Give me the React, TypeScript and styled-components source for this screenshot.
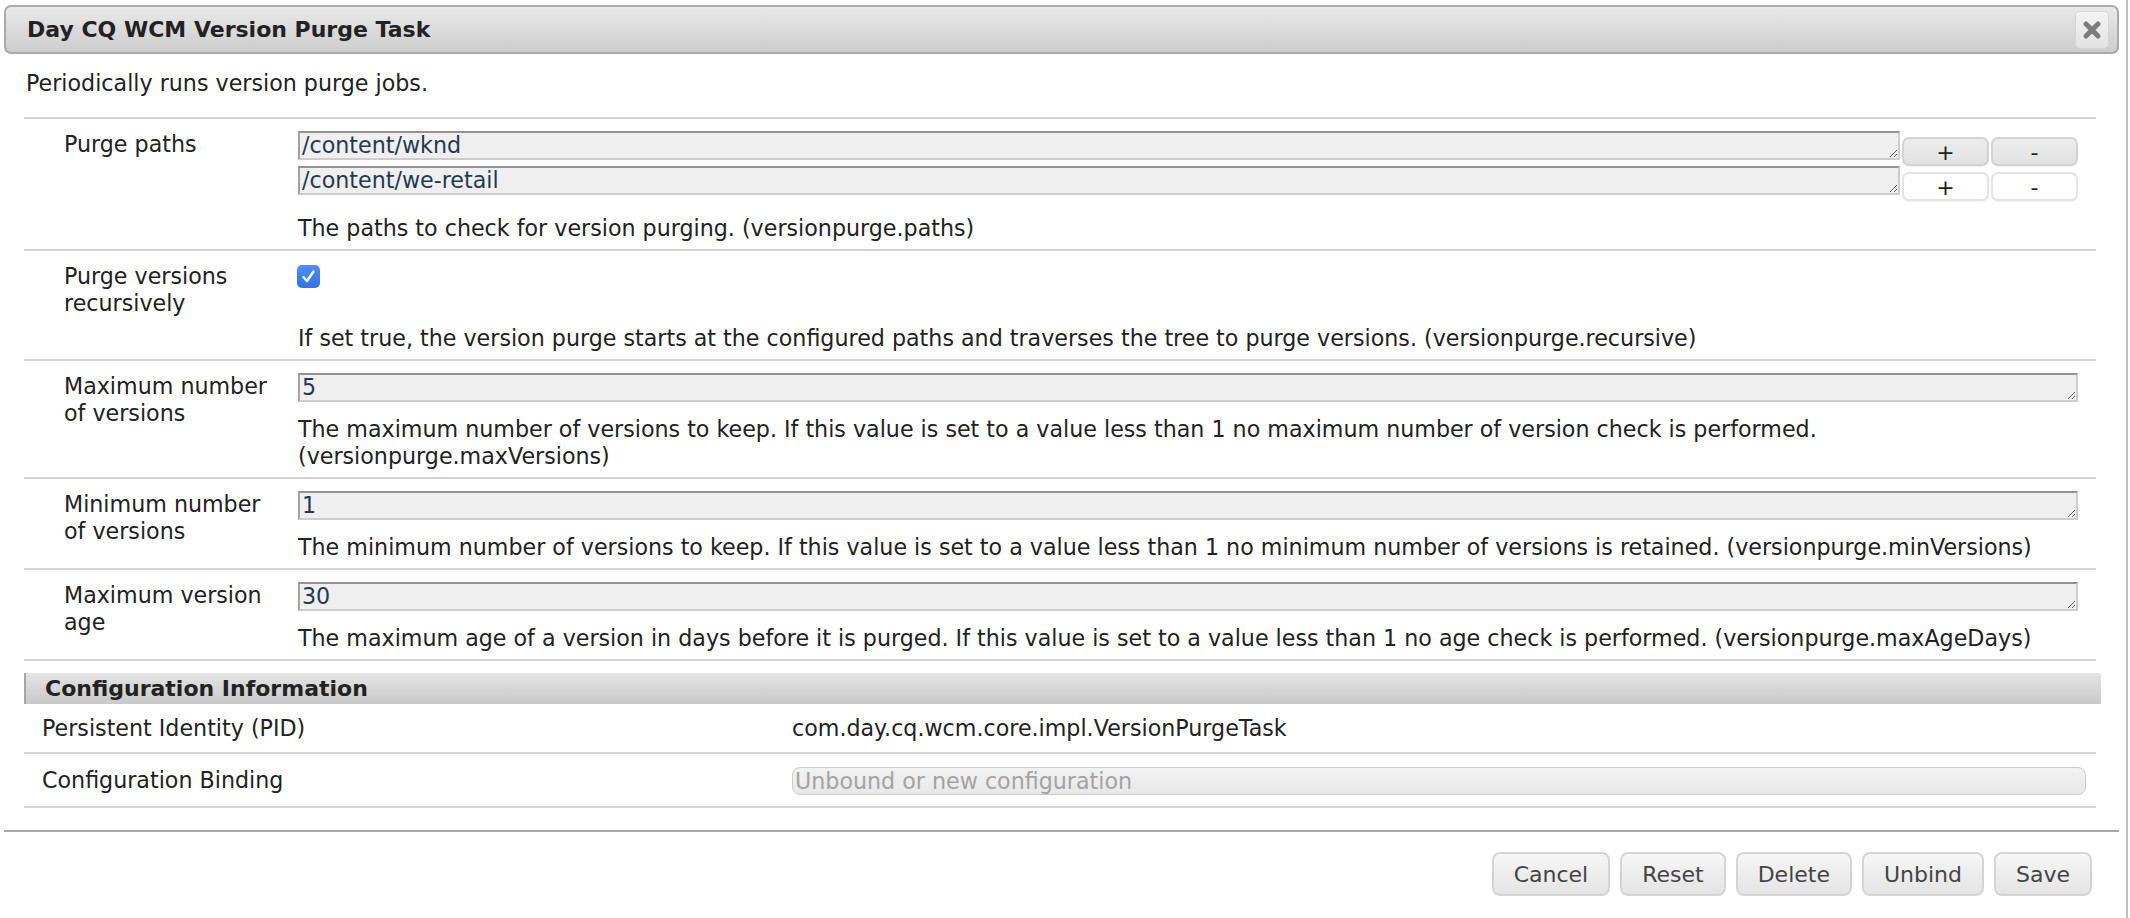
import React from "react";
import styled, { createGlobalStyle } from "styled-components";

const GlobalStyle = createGlobalStyle`
  html, body {
    margin: 0;
    padding: 0;
    background: #ffffff;
  }
  body {
    font-family: "DejaVu Sans", Verdana, sans-serif;
    font-size: 22.2px;
    color: #222222;
  }
  * {
    box-sizing: border-box;
  }
`;

const Dialog = styled.div`
  width: 2128px;
  height: 918px;
  border-right: 2px solid #c2c2c2;
  padding: 5px 7px 0 4px;
  display: flex;
  flex-direction: column;
`;

const TitleBar = styled.div`
  height: 49px;
  border: 2px solid #aaaaaa;
  border-radius: 7px;
  background: linear-gradient(#e9e9e9, #cdcdcd);
  display: flex;
  align-items: center;
  justify-content: space-between;
  padding: 0 8px 0 21px;
`;

const Title = styled.span`
  font-weight: bold;
  font-size: 22px;
  color: #222222;
`;

const CloseButton = styled.button`
  width: 34px;
  height: 38px;
  border: 1px solid #d6d6d6;
  border-radius: 5px;
  background: linear-gradient(#f4f4f4, #e2e2e2);
  display: flex;
  align-items: center;
  justify-content: center;
  padding: 0;
`;

const Body = styled.div`
  padding: 0 23px 0 20px;
`;

const Intro = styled.p`
  margin: 16px 0 20px 2px;
  line-height: 27px;
`;

const Form = styled.div`
  border-top: 2px solid #d3d3d3;
`;

const Row = styled.div`
  display: grid;
  grid-template-columns: 234px 1fr;
  padding: 12px 18px 7px 40px;
  border-bottom: 2px solid #d3d3d3;
`;

const Label = styled.div`
  line-height: 27px;
  padding-right: 20px;
`;

const Field = styled.div`
  display: flex;
  flex-direction: column;
`;

const PathLine = styled.div`
  display: flex;
  align-items: flex-start;
  gap: 2px;
`;

const TextInput = styled.textarea<{ $tall?: boolean }>`
  flex: 1;
  width: 100%;
  height: ${(p) => (p.$tall ? "29px" : "28px")};
  margin: 0;
  padding: 0 2px;
  font-family: "DejaVu Sans", Verdana, sans-serif;
  font-size: 22.2px;
  line-height: 25px;
  color: #1f3a52;
  background: #efefef;
  border: 2px solid;
  border-color: #929292 #cdcdcd #cdcdcd #a4a4a4;
  overflow: hidden;
  white-space: nowrap;
  display: block;
`;

const SmallButton = styled.button<{ $pressed?: boolean }>`
  width: 87px;
  height: 29px;
  margin-top: 6px;
  border: 2px solid ${(p) => (p.$pressed ? "#d2d2d2" : "#e4e4e4")};
  border-radius: 7px;
  background: ${(p) => (p.$pressed ? "linear-gradient(#ececec, #e2e2e2)" : "#ffffff")};
  font-family: "DejaVu Sans", Verdana, sans-serif;
  font-size: 22px;
  line-height: 22px;
  color: #222222;
  padding: 2px 0 0;
  box-shadow: 0 1px 1px rgba(0, 0, 0, 0.06);
`;

const Help = styled.div<{ $gap?: number }>`
  margin-top: ${(p) => p.$gap ?? 14}px;
  line-height: 27px;
`;

const CheckLine = styled.div`
  height: 27px;
  display: flex;
  align-items: center;
`;

const CheckBox = styled.span`
  width: 23px;
  height: 23px;
  border-radius: 5px;
  background: linear-gradient(#4d8ff8, #2f72ec);
  display: inline-flex;
  align-items: center;
  justify-content: center;
  margin-left: -1px;
`;

const InfoHeader = styled.div`
  margin-top: 12px;
  height: 31px;
  line-height: 31px;
  padding-left: 19px;
  font-weight: bold;
  font-size: 22px;
  color: #222222;
  border-left: 2px solid #a6a6a6;
  background: linear-gradient(#e4e4e4, #c9c9c9);
  margin-right: -5px;
`;

const InfoRow = styled.div<{ $height: number }>`
  display: grid;
  grid-template-columns: 750px 1fr;
  align-items: center;
  min-height: ${(p) => p.$height}px;
  padding: 0 10px 0 18px;
  border-bottom: 2px solid #d3d3d3;
`;

const DisabledInput = styled.div`
  height: 28px;
  line-height: 26px;
  padding: 0 2px;
  border: 1px solid #cccccc;
  border-radius: 8px;
  background: linear-gradient(#f2f2f2, #e8e8e8);
  color: #a3a3a3;
  margin-top: 1px;
`;

const Footer = styled.div`
  margin-top: 22px;
  border-top: 2px solid #a9a9a9;
  display: flex;
  justify-content: flex-end;
  gap: 10px;
  padding: 20px 27px 0 0;
`;

const ActionButton = styled.button`
  height: 44px;
  padding: 0 20px;
  border: 2px solid #d5d5d5;
  border-radius: 8px;
  background: linear-gradient(#f6f6f6, #e4e4e4);
  font-family: "DejaVu Sans", Verdana, sans-serif;
  font-size: 22px;
  color: #444444;
`;

const Check = () => (
  <svg width="15" height="15" viewBox="0 0 15 15">
    <path d="M2.5 8 L6 12 L12.5 2.5" fill="none" stroke="#ffffff" strokeWidth="2.4" strokeLinecap="round" strokeLinejoin="round" />
  </svg>
);

const CloseIcon = () => (
  <svg width="22" height="22" viewBox="0 0 22 22">
    <path d="M5 5 L17 17 M17 5 L5 17" stroke="#7d7d7d" strokeWidth="5" strokeLinecap="round" />
  </svg>
);

const paths = ["/content/wknd", "/content/we-retail"];

const numberFields = [
  {
    label: "Maximum number of versions",
    value: "5",
    help: (
      <>
        The maximum number of versions to keep. If this value is set to a value less than 1 no maximum number of version check is performed.
        <br />
        (versionpurge.maxVersions)
      </>
    ),
  },
  {
    label: "Minimum number of versions",
    value: "1",
    help: "The minimum number of versions to keep. If this value is set to a value less than 1 no minimum number of versions is retained. (versionpurge.minVersions)",
  },
  {
    label: "Maximum version age",
    value: "30",
    help: "The maximum age of a version in days before it is purged. If this value is set to a value less than 1 no age check is performed. (versionpurge.maxAgeDays)",
  },
];

export default function App() {
  return (
    <>
      <GlobalStyle />
      <Dialog>
        <TitleBar>
          <Title>Day CQ WCM Version Purge Task</Title>
          <CloseButton aria-label="close">
            <CloseIcon />
          </CloseButton>
        </TitleBar>
        <Body>
          <Intro>Periodically runs version purge jobs.</Intro>
          <Form>
            <Row>
              <Label>Purge paths</Label>
              <Field>
                {paths.map((p, i) => (
                  <PathLine key={p}>
                    <TextInput $tall rows={1} defaultValue={p} />
                    <SmallButton $pressed={i === 0}>+</SmallButton>
                    <SmallButton $pressed={i === 0}>-</SmallButton>
                  </PathLine>
                ))}
                <Help $gap={14}>The paths to check for version purging. (versionpurge.paths)</Help>
              </Field>
            </Row>
            <Row>
              <Label>
                Purge versions
                <br />
                recursively
              </Label>
              <Field>
                <CheckLine>
                  <CheckBox>
                    <Check />
                  </CheckBox>
                </CheckLine>
                <Help $gap={35}>
                  If set true, the version purge starts at the configured paths and traverses the tree to purge versions. (versionpurge.recursive)
                </Help>
              </Field>
            </Row>
            {numberFields.map((f) => (
              <Row key={f.label}>
                <Label>{f.label}</Label>
                <Field>
                  <TextInput rows={1} defaultValue={f.value} />
                  <Help>{f.help}</Help>
                </Field>
              </Row>
            ))}
          </Form>
          <InfoHeader>Configuration Information</InfoHeader>
          <InfoRow $height={50}>
            <span>Persistent Identity (PID)</span>
            <span>com.day.cq.wcm.core.impl.VersionPurgeTask</span>
          </InfoRow>
          <InfoRow $height={54}>
            <span>Configuration Binding</span>
            <DisabledInput>Unbound or new configuration</DisabledInput>
          </InfoRow>
        </Body>
        <Footer>
          <ActionButton>Cancel</ActionButton>
          <ActionButton>Reset</ActionButton>
          <ActionButton>Delete</ActionButton>
          <ActionButton>Unbind</ActionButton>
          <ActionButton>Save</ActionButton>
        </Footer>
      </Dialog>
    </>
  );
}
